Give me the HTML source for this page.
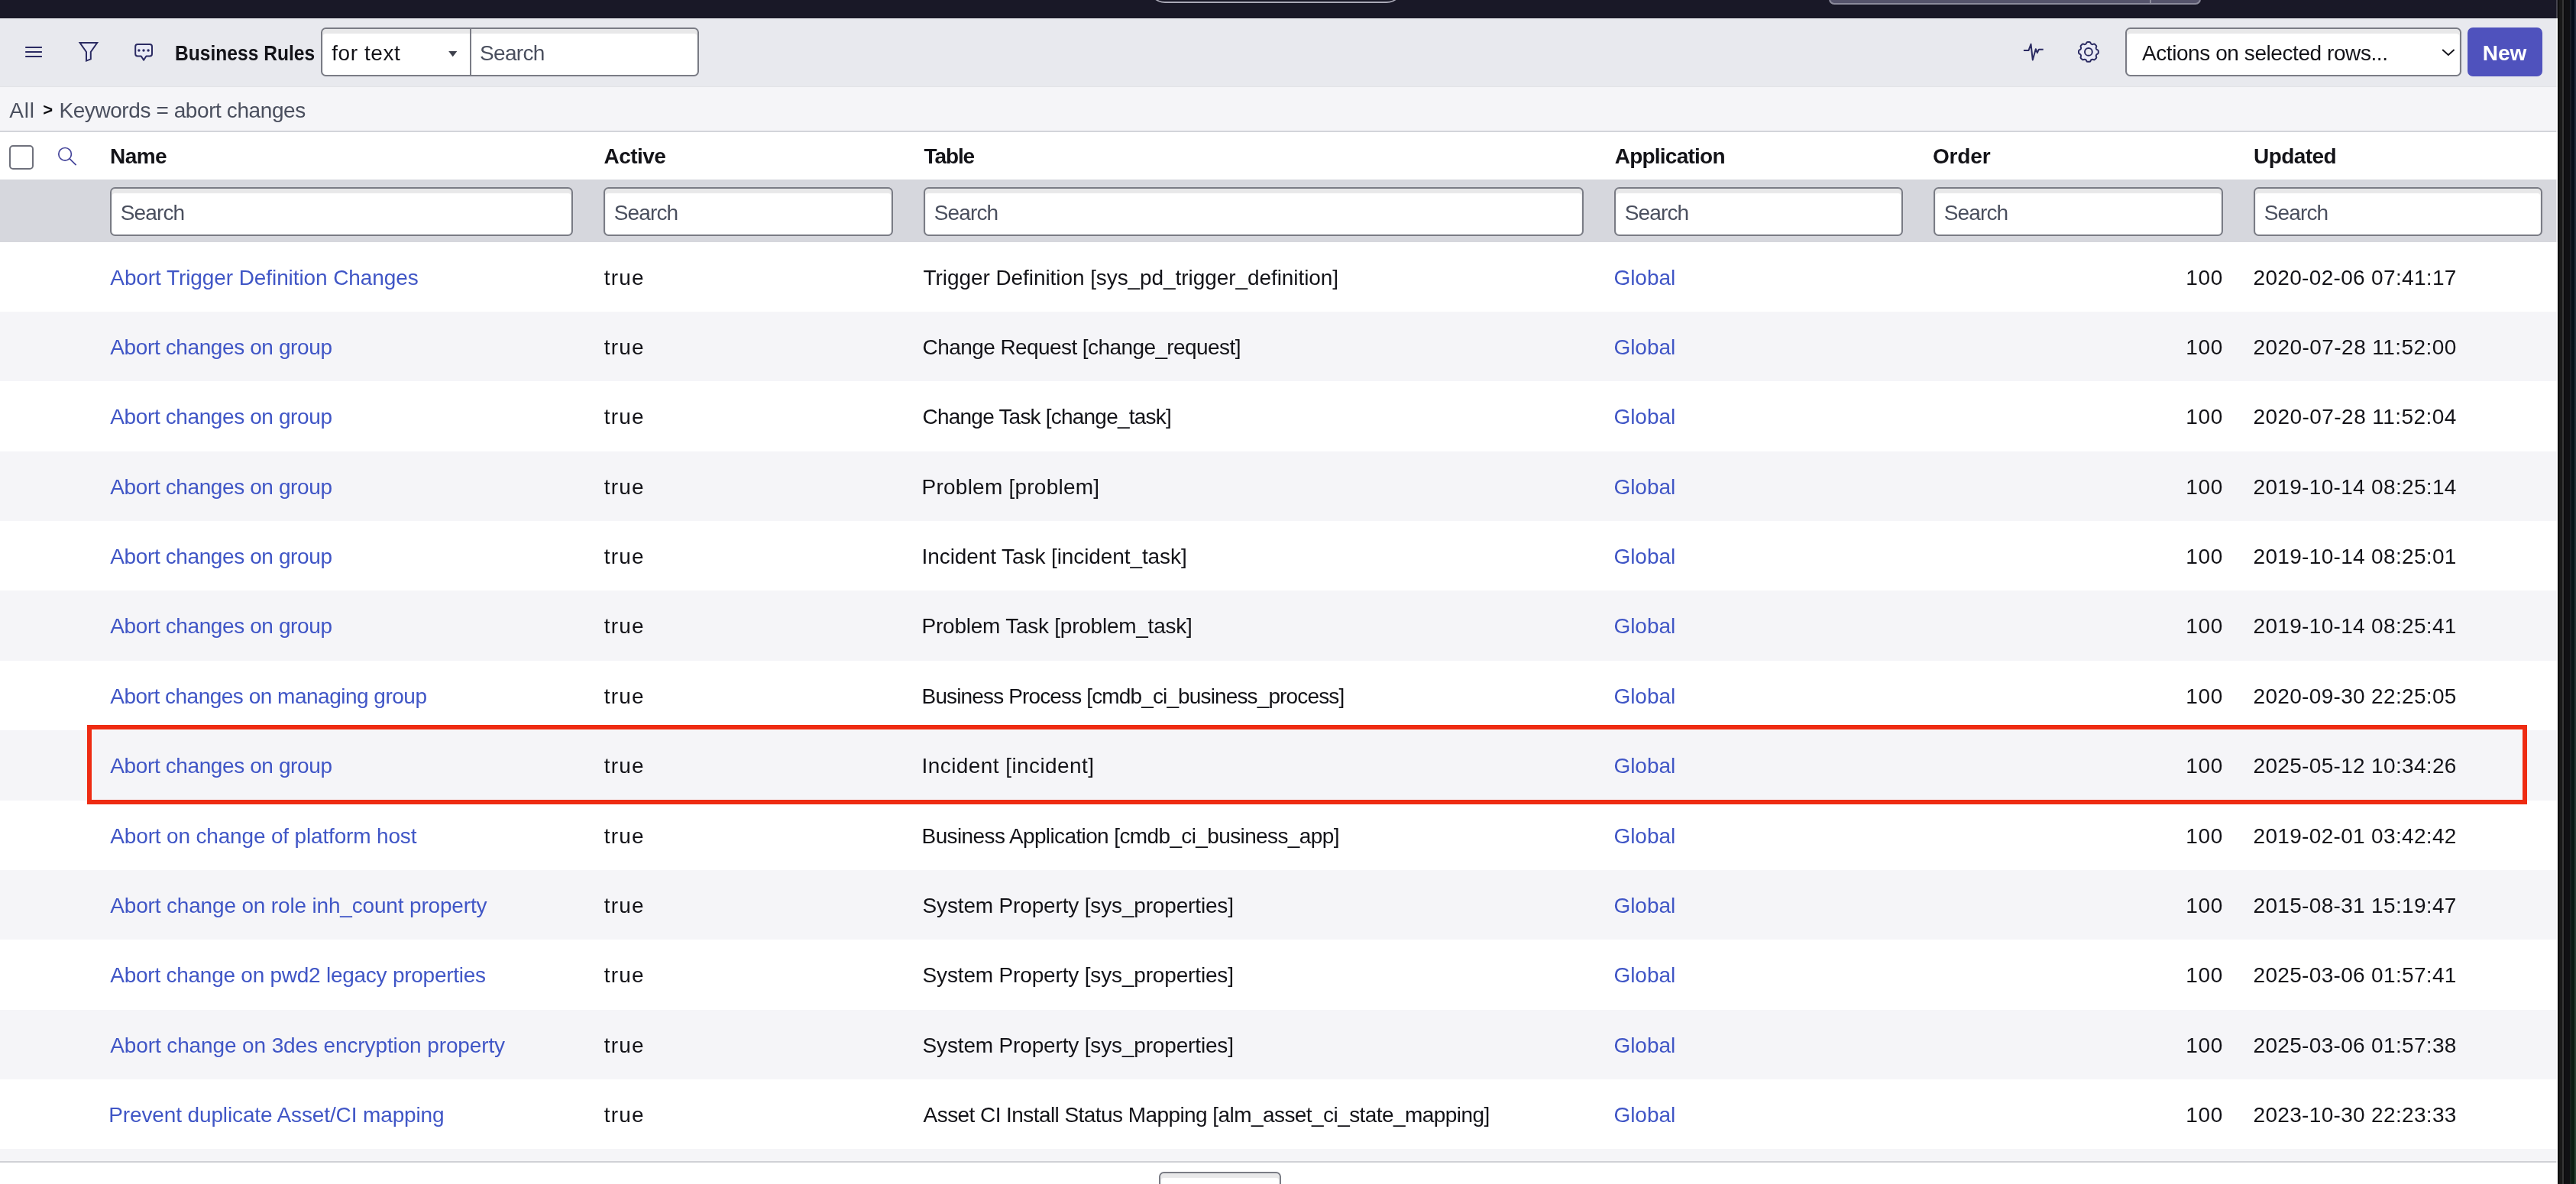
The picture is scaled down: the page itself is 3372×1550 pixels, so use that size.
<!DOCTYPE html>
<html lang="en">
<head>
<meta charset="utf-8">
<title>Business Rules</title>
<style>
html,body{margin:0;padding:0;}
body{width:3372px;height:1550px;overflow:hidden;position:relative;background:#fff;font-family:"Liberation Sans",sans-serif;font-size:28px;color:#131318;}
.abs,.t,.box,.row,svg{position:absolute;}
.t{white-space:pre;line-height:40px;font-size:28px;}
.b{font-weight:700;}
.lnk{color:#4056c6;}
.ph{color:#4a4f5e;}
.box{box-sizing:border-box;background:#fff;border:2px solid #7a7c85;border-radius:6.5px;box-shadow:inset 0 6px 1px #e8e8e9, inset 1px 0 1px #eeeff1, inset -1px 0 1px #eeeff1;}
.row{left:0;width:3348px;height:91.4px;}
.alt{background:#f5f5f8;}
.grp{position:static;display:block;margin:0;padding:0;}
</style>
</head>
<body>
<div id="app" style="position:absolute;left:0;top:0;width:3372px;height:1550px;will-change:transform;">

<div class="grp" aria-label="Application chrome">
<div class="abs" id="chrome" style="left:0;top:0;width:3348px;height:24px;background:#191827;"></div>
<div class="abs" style="left:1502.5px;top:-40px;width:334.5px;height:44px;box-sizing:border-box;border:2px solid #a9a8b6;border-radius:22px;"></div>
<div class="abs" style="left:2394px;top:-40px;width:487px;height:46px;box-sizing:border-box;border:2px solid #8c8b9c;border-radius:7px;background:#56546c;"></div>
<div class="abs" style="left:2814px;top:0;width:2px;height:5px;background:#8c8b9c;"></div>
</div>
<header class="grp" aria-label="List toolbar">
<div class="abs" id="toolbar" style="left:0;top:24px;width:3348px;height:90px;box-sizing:border-box;background:#e8e9ee;border-bottom:1px solid #e2e3e7;"></div>
<svg style="left:30px;top:54px" width="30" height="30" viewBox="30 54 30 30"><path d="M33.2 62.1H54.9M33.2 68H54.9M33.2 73.9H54.9" stroke="#2b2b62" stroke-width="2" fill="none"/></svg>
<svg style="left:98px;top:50px" width="36" height="36" viewBox="98 50 36 36"><path d="M104.6 56.1H127.2L118.8 68V77.4L113 79.6V68Z" stroke="#2b2b62" stroke-width="2" fill="#e9eaf6" stroke-linejoin="miter"/></svg>
<svg style="left:172px;top:52px" width="34" height="34" viewBox="172 52 34 34"><path d="M180.2 57.9H196a3 3 0 0 1 3 3V70.5a3 3 0 0 1 -3 3H191.4L188.1 78.6L184.8 73.5H180.2a3 3 0 0 1 -3 -3V60.9a3 3 0 0 1 3 -3Z" stroke="#2b2b62" stroke-width="2" fill="#e9eaf6" stroke-linejoin="round"/><circle cx="181.9" cy="66" r="1.7" fill="#2b2b62"/><circle cx="188" cy="66" r="1.7" fill="#2b2b62"/><circle cx="194.1" cy="66" r="1.7" fill="#2b2b62"/></svg>
<span class="t b" style="left:228.8px;top:50px;transform:scaleX(0.8780);transform-origin:0 0;">Business Rules</span>
<div class="box" style="left:420px;top:36px;width:495px;height:64px;"></div>
<div class="abs" style="left:615px;top:36px;width:2px;height:64px;background:#7a7c85;"></div>
<span class="t" style="left:434.2px;top:50px;letter-spacing:0.570px;">for text</span>
<svg style="left:586px;top:66px" width="14" height="10" viewBox="586 66 14 10"><path d="M587.2 67H598.3L592.75 74.2Z" fill="#3d404c"/></svg>
<span class="t ph" style="left:628.0px;top:50px;letter-spacing:-0.669px;">Search</span>
<svg style="left:2644px;top:50px" width="36" height="36" viewBox="2644 50 36 36"><path d="M2648.9 65.9H2655.5L2658.5 57.8L2660.8 78.4L2664.8 64.2L2666.8 69.2L2668.9 64.7H2674.7" stroke="#2b2b62" stroke-width="2" fill="none" stroke-linejoin="round"/></svg>
<svg style="left:2716px;top:50px" width="36" height="36" viewBox="2716 50 36 36"><path d="M2729.79 57.92Q2730.78 57.51 2731.14 56.47L2731.28 56.08Q2731.65 55.05 2732.75 55.05L2735.05 55.05Q2736.15 55.05 2736.52 56.08L2736.66 56.47Q2737.02 57.51 2738.01 57.92L2738.09 57.95Q2739.08 58.36 2740.07 57.88L2740.44 57.71Q2741.43 57.23 2742.21 58.01L2743.84 59.64Q2744.62 60.42 2744.14 61.41L2743.97 61.78Q2743.49 62.77 2743.90 63.76L2743.93 63.84Q2744.34 64.83 2745.38 65.19L2745.77 65.33Q2746.80 65.70 2746.80 66.80L2746.80 69.10Q2746.80 70.20 2745.77 70.57L2745.38 70.71Q2744.34 71.07 2743.93 72.06L2743.90 72.14Q2743.49 73.13 2743.97 74.12L2744.14 74.49Q2744.62 75.48 2743.84 76.26L2742.21 77.89Q2741.43 78.67 2740.44 78.19L2740.07 78.02Q2739.08 77.54 2738.09 77.95L2738.01 77.98Q2737.02 78.39 2736.66 79.43L2736.52 79.82Q2736.15 80.85 2735.05 80.85L2732.75 80.85Q2731.65 80.85 2731.28 79.82L2731.14 79.43Q2730.78 78.39 2729.79 77.98L2729.71 77.95Q2728.72 77.54 2727.73 78.02L2727.36 78.19Q2726.37 78.67 2725.59 77.89L2723.96 76.26Q2723.18 75.48 2723.66 74.49L2723.83 74.12Q2724.31 73.13 2723.90 72.14L2723.87 72.06Q2723.46 71.07 2722.42 70.71L2722.03 70.57Q2721.00 70.20 2721.00 69.10L2721.00 66.80Q2721.00 65.70 2722.03 65.33L2722.42 65.19Q2723.46 64.83 2723.87 63.84L2723.90 63.76Q2724.31 62.77 2723.83 61.78L2723.66 61.41Q2723.18 60.42 2723.96 59.64L2725.59 58.01Q2726.37 57.23 2727.36 57.71L2727.73 57.88Q2728.72 58.36 2729.71 57.95Z" stroke="#2b2b62" stroke-width="2" fill="#e9eaf6" stroke-linejoin="round"/><circle cx="2733.9" cy="67.95" r="4.9" stroke="#2b2b62" stroke-width="2" fill="#e8e9ee"/></svg>
<div class="box" style="left:2782px;top:36px;width:440px;height:64px;"></div>
<span class="t" style="left:2804.0px;top:50px;letter-spacing:-0.426px;">Actions on selected rows...</span>
<svg style="left:3192px;top:60px" width="26" height="18" viewBox="3192 60 26 18"><path d="M3197.2 65L3204.9 72L3212.6 65" stroke="#16161d" stroke-width="2" fill="none"/></svg>
<div class="abs" style="left:3230px;top:36px;width:98px;height:64px;background:#4f52bd;border-radius:7px;"></div>
<span class="t b" style="left:3249.7px;top:50px;letter-spacing:0.054px;color:#fff;">New</span>
</header>
<nav class="grp" aria-label="Filter breadcrumb">
<div class="abs" id="crumb" style="left:0;top:114px;width:3348px;height:57px;background:#f5f5f8;"></div>
<div class="abs" style="left:0;top:171px;width:3348px;height:2px;background:#d3d4da;"></div>
<span class="t ph" style="left:12.2px;top:125px;letter-spacing:0.802px;">All</span>
<span class="t" style="left:56.2px;top:124.2px;font-size:22px;font-weight:700;color:#0c0c10;">&gt;</span>
<span class="t ph" style="left:77.4px;top:125px;letter-spacing:-0.413px;">Keywords = abort changes</span>
</nav>
<section class="grp" role="table" aria-label="Business Rules">
<div class="grp" role="row">
<div class="abs" style="left:12px;top:190px;width:32px;height:32px;box-sizing:border-box;border:2px solid #6f717c;border-radius:5px;background:#fff;"></div>
<svg style="left:70px;top:186px" width="36" height="36" viewBox="70 186 36 36"><circle cx="85.1" cy="201.8" r="8.3" stroke="#45459a" stroke-width="1.7" fill="none"/><path d="M91.2 207.9L99.6 216.2" stroke="#45459a" stroke-width="1.7" fill="none"/></svg>
<span class="t b" style="left:144.0px;top:185px;letter-spacing:-0.563px;">Name</span>
<span class="t b" style="left:790.5px;top:185px;letter-spacing:-0.554px;">Active</span>
<span class="t b" style="left:1209.6px;top:185px;letter-spacing:-1.120px;">Table</span>
<span class="t b" style="left:2113.7px;top:185px;letter-spacing:-0.764px;">Application</span>
<span class="t b" style="left:2530.0px;top:185px;letter-spacing:-0.163px;">Order</span>
<span class="t b" style="left:2950.0px;top:185px;letter-spacing:-0.583px;">Updated</span>
</div>
<div class="grp" role="row" aria-label="Column search">
<div class="abs" id="filter" style="left:0;top:235px;width:3348px;height:82px;background:#d6d7dd;"></div>
<div class="box" style="left:144.0px;top:245px;width:606.0px;height:64px;"></div>
<span class="t ph" style="left:157.8px;top:259px;letter-spacing:-0.869px;">Search</span>
<div class="box" style="left:790.0px;top:245px;width:379.0px;height:64px;"></div>
<span class="t ph" style="left:803.8px;top:259px;letter-spacing:-0.869px;">Search</span>
<div class="box" style="left:1209.0px;top:245px;width:864.0px;height:64px;"></div>
<span class="t ph" style="left:1222.8px;top:259px;letter-spacing:-0.869px;">Search</span>
<div class="box" style="left:2113.0px;top:245px;width:378.0px;height:64px;"></div>
<span class="t ph" style="left:2126.8px;top:259px;letter-spacing:-0.869px;">Search</span>
<div class="box" style="left:2531.0px;top:245px;width:379.0px;height:64px;"></div>
<span class="t ph" style="left:2544.8px;top:259px;letter-spacing:-0.869px;">Search</span>
<div class="box" style="left:2950.0px;top:245px;width:378.0px;height:64px;"></div>
<span class="t ph" style="left:2963.8px;top:259px;letter-spacing:-0.869px;">Search</span>
</div>
<div class="grp" role="row">
<span class="t lnk" style="left:144.3px;top:344px;letter-spacing:-0.088px;">Abort Trigger Definition Changes</span>
<span class="t" style="left:790.7px;top:344px;letter-spacing:1.175px;">true</span>
<span class="t" style="left:1208.6px;top:344px;letter-spacing:-0.074px;">Trigger Definition [sys_pd_trigger_definition]</span>
<span class="t lnk" style="left:2112.5px;top:344px;letter-spacing:-0.063px;">Global</span>
<span class="t" style="left:2861.3px;top:344px;letter-spacing:0.678px;">100</span>
<span class="t" style="left:2949.5px;top:344px;letter-spacing:0.326px;">2020-02-06 07:41:17</span>
</div>
<div class="grp" role="row">
<div class="row alt" style="top:407.96px;"></div>
<span class="t lnk" style="left:144.3px;top:435px;letter-spacing:-0.391px;">Abort changes on group</span>
<span class="t" style="left:790.7px;top:435px;letter-spacing:1.175px;">true</span>
<span class="t" style="left:1207.6px;top:435px;letter-spacing:-0.581px;">Change Request [change_request]</span>
<span class="t lnk" style="left:2112.5px;top:435px;letter-spacing:-0.063px;">Global</span>
<span class="t" style="left:2861.3px;top:435px;letter-spacing:0.678px;">100</span>
<span class="t" style="left:2949.5px;top:435px;letter-spacing:0.442px;">2020-07-28 11:52:00</span>
</div>
<div class="grp" role="row">
<span class="t lnk" style="left:144.3px;top:526px;letter-spacing:-0.391px;">Abort changes on group</span>
<span class="t" style="left:790.7px;top:526px;letter-spacing:1.175px;">true</span>
<span class="t" style="left:1207.6px;top:526px;letter-spacing:-0.791px;">Change Task [change_task]</span>
<span class="t lnk" style="left:2112.5px;top:526px;letter-spacing:-0.063px;">Global</span>
<span class="t" style="left:2861.3px;top:526px;letter-spacing:0.678px;">100</span>
<span class="t" style="left:2949.5px;top:526px;letter-spacing:0.442px;">2020-07-28 11:52:04</span>
</div>
<div class="grp" role="row">
<div class="row alt" style="top:590.68px;"></div>
<span class="t lnk" style="left:144.3px;top:618px;letter-spacing:-0.391px;">Abort changes on group</span>
<span class="t" style="left:790.7px;top:618px;letter-spacing:1.175px;">true</span>
<span class="t" style="left:1206.6px;top:618px;letter-spacing:0.233px;">Problem [problem]</span>
<span class="t lnk" style="left:2112.5px;top:618px;letter-spacing:-0.063px;">Global</span>
<span class="t" style="left:2861.3px;top:618px;letter-spacing:0.678px;">100</span>
<span class="t" style="left:2949.5px;top:618px;letter-spacing:0.326px;">2019-10-14 08:25:14</span>
</div>
<div class="grp" role="row">
<span class="t lnk" style="left:144.3px;top:709px;letter-spacing:-0.391px;">Abort changes on group</span>
<span class="t" style="left:790.7px;top:709px;letter-spacing:1.175px;">true</span>
<span class="t" style="left:1206.6px;top:709px;letter-spacing:-0.093px;">Incident Task [incident_task]</span>
<span class="t lnk" style="left:2112.5px;top:709px;letter-spacing:-0.063px;">Global</span>
<span class="t" style="left:2861.3px;top:709px;letter-spacing:0.678px;">100</span>
<span class="t" style="left:2949.5px;top:709px;letter-spacing:0.326px;">2019-10-14 08:25:01</span>
</div>
<div class="grp" role="row">
<div class="row alt" style="top:773.40px;"></div>
<span class="t lnk" style="left:144.3px;top:800px;letter-spacing:-0.391px;">Abort changes on group</span>
<span class="t" style="left:790.7px;top:800px;letter-spacing:1.175px;">true</span>
<span class="t" style="left:1206.6px;top:800px;letter-spacing:-0.244px;">Problem Task [problem_task]</span>
<span class="t lnk" style="left:2112.5px;top:800px;letter-spacing:-0.063px;">Global</span>
<span class="t" style="left:2861.3px;top:800px;letter-spacing:0.678px;">100</span>
<span class="t" style="left:2949.5px;top:800px;letter-spacing:0.326px;">2019-10-14 08:25:41</span>
</div>
<div class="grp" role="row">
<span class="t lnk" style="left:144.3px;top:892px;letter-spacing:-0.499px;">Abort changes on managing group</span>
<span class="t" style="left:790.7px;top:892px;letter-spacing:1.175px;">true</span>
<span class="t" style="left:1206.6px;top:892px;letter-spacing:-0.863px;">Business Process [cmdb_ci_business_process]</span>
<span class="t lnk" style="left:2112.5px;top:892px;letter-spacing:-0.063px;">Global</span>
<span class="t" style="left:2861.3px;top:892px;letter-spacing:0.678px;">100</span>
<span class="t" style="left:2949.5px;top:892px;letter-spacing:0.326px;">2020-09-30 22:25:05</span>
</div>
<div class="grp" role="row">
<div class="row alt" style="top:956.12px;"></div>
<span class="t lnk" style="left:144.3px;top:983px;letter-spacing:-0.391px;">Abort changes on group</span>
<span class="t" style="left:790.7px;top:983px;letter-spacing:1.175px;">true</span>
<span class="t" style="left:1206.6px;top:983px;letter-spacing:0.420px;">Incident [incident]</span>
<span class="t lnk" style="left:2112.5px;top:983px;letter-spacing:-0.063px;">Global</span>
<span class="t" style="left:2861.3px;top:983px;letter-spacing:0.678px;">100</span>
<span class="t" style="left:2949.5px;top:983px;letter-spacing:0.326px;">2025-05-12 10:34:26</span>
</div>
<div class="grp" role="row">
<span class="t lnk" style="left:144.3px;top:1075px;letter-spacing:-0.163px;">Abort on change of platform host</span>
<span class="t" style="left:790.7px;top:1075px;letter-spacing:1.175px;">true</span>
<span class="t" style="left:1206.6px;top:1075px;letter-spacing:-0.618px;">Business Application [cmdb_ci_business_app]</span>
<span class="t lnk" style="left:2112.5px;top:1075px;letter-spacing:-0.063px;">Global</span>
<span class="t" style="left:2861.3px;top:1075px;letter-spacing:0.678px;">100</span>
<span class="t" style="left:2949.5px;top:1075px;letter-spacing:0.326px;">2019-02-01 03:42:42</span>
</div>
<div class="grp" role="row">
<div class="row alt" style="top:1138.84px;"></div>
<span class="t lnk" style="left:144.3px;top:1166px;letter-spacing:-0.170px;">Abort change on role inh_count property</span>
<span class="t" style="left:790.7px;top:1166px;letter-spacing:1.175px;">true</span>
<span class="t" style="left:1207.6px;top:1166px;letter-spacing:-0.161px;">System Property [sys_properties]</span>
<span class="t lnk" style="left:2112.5px;top:1166px;letter-spacing:-0.063px;">Global</span>
<span class="t" style="left:2861.3px;top:1166px;letter-spacing:0.678px;">100</span>
<span class="t" style="left:2949.5px;top:1166px;letter-spacing:0.326px;">2015-08-31 15:19:47</span>
</div>
<div class="grp" role="row">
<span class="t lnk" style="left:144.3px;top:1257px;letter-spacing:-0.254px;">Abort change on pwd2 legacy properties</span>
<span class="t" style="left:790.7px;top:1257px;letter-spacing:1.175px;">true</span>
<span class="t" style="left:1207.6px;top:1257px;letter-spacing:-0.161px;">System Property [sys_properties]</span>
<span class="t lnk" style="left:2112.5px;top:1257px;letter-spacing:-0.063px;">Global</span>
<span class="t" style="left:2861.3px;top:1257px;letter-spacing:0.678px;">100</span>
<span class="t" style="left:2949.5px;top:1257px;letter-spacing:0.326px;">2025-03-06 01:57:41</span>
</div>
<div class="grp" role="row">
<div class="row alt" style="top:1321.56px;"></div>
<span class="t lnk" style="left:144.3px;top:1349px;letter-spacing:-0.119px;">Abort change on 3des encryption property</span>
<span class="t" style="left:790.7px;top:1349px;letter-spacing:1.175px;">true</span>
<span class="t" style="left:1207.6px;top:1349px;letter-spacing:-0.161px;">System Property [sys_properties]</span>
<span class="t lnk" style="left:2112.5px;top:1349px;letter-spacing:-0.063px;">Global</span>
<span class="t" style="left:2861.3px;top:1349px;letter-spacing:0.678px;">100</span>
<span class="t" style="left:2949.5px;top:1349px;letter-spacing:0.326px;">2025-03-06 01:57:38</span>
</div>
<div class="grp" role="row">
<span class="t lnk" style="left:142.3px;top:1440px;letter-spacing:-0.129px;">Prevent duplicate Asset/CI mapping</span>
<span class="t" style="left:790.7px;top:1440px;letter-spacing:1.175px;">true</span>
<span class="t" style="left:1208.6px;top:1440px;letter-spacing:-0.566px;">Asset CI Install Status Mapping [alm_asset_ci_state_mapping]</span>
<span class="t lnk" style="left:2112.5px;top:1440px;letter-spacing:-0.063px;">Global</span>
<span class="t" style="left:2861.3px;top:1440px;letter-spacing:0.678px;">100</span>
<span class="t" style="left:2949.5px;top:1440px;letter-spacing:0.326px;">2023-10-30 22:23:33</span>
</div>
</section>
<div class="abs" style="left:114px;top:949px;width:3194px;height:104px;box-sizing:border-box;border:6px solid #ee2b12;"></div>
<div class="abs" style="left:0;top:1504px;width:3348px;height:16px;background:#f5f5f8;"></div>
<div class="abs" style="left:0;top:1520px;width:3348px;height:2px;background:#d0d1d6;"></div>
<div class="box" style="left:1517px;top:1534px;width:160px;height:60px;"></div>
<div class="grp" aria-label="Window edge">
<div class="abs" style="left:3346px;top:0;width:2px;height:24px;background:#46454f;"></div>
<div class="abs" style="left:3346px;top:24px;width:2px;height:1526px;background:rgba(255,255,255,.7);"></div>
<div class="abs" style="left:3348px;top:0;width:16px;height:1550px;background:linear-gradient(to right,#000 0,#000 1px,#181818 1px,#181818 6px,#353535 6px,#353535 8px,#0b0b0c 8px,#101013 10px,#101013 16px);"></div>
<div class="abs" style="left:3364px;top:0;width:2px;height:1550px;background:linear-gradient(to bottom,#1a1e28,#1b2226 50%,#18231c);"></div>
<div class="abs" style="left:3366px;top:0;width:4px;height:1550px;background:linear-gradient(to bottom,#050c1a,#071517 50%,#0b1d10);"></div>
<div class="abs" style="left:3370px;top:0;width:2px;height:1550px;background:linear-gradient(to bottom,#222b3d,#253436 50%,#2b4232);"></div>
</div>
</div>
</body>
</html>
